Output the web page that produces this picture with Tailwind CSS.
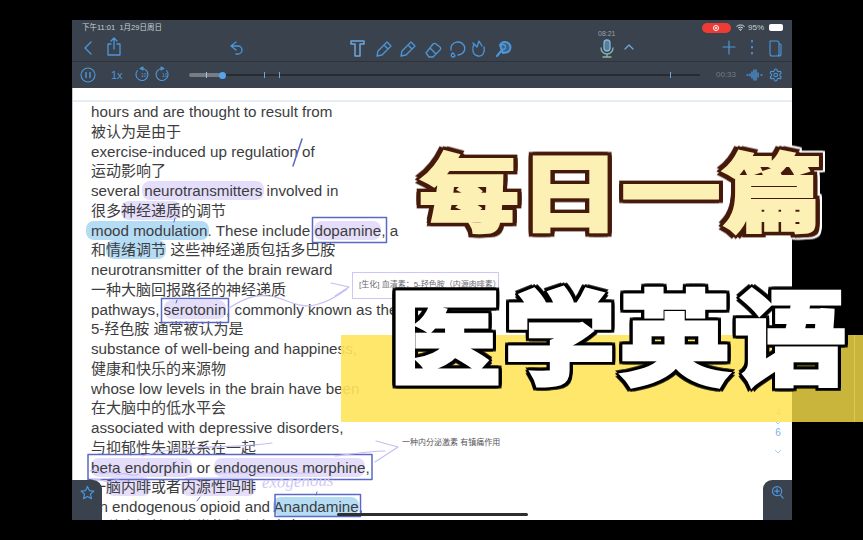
<!DOCTYPE html>
<html lang="zh"><head><meta charset="utf-8"><script src="https://cdn.jsdelivr.net/npm/@tailwindcss/browser@4"></script></head>
<body class="bg-black">
<div class="relative w-[863px] h-[540px] overflow-hidden bg-black font-['Liberation_Sans','Noto_Sans_CJK_SC',sans-serif]">
  <div class="pt-5 pl-[72px] w-[792px] h-[520px]">
    <div class="relative flex flex-col w-[720px] h-[500px] bg-white overflow-hidden">
      <!-- toolbars -->
      <header class="h-[68px] bg-[#39424d] text-[#4d97dc] shrink-0">
        <div class="h-[42px] border-b border-[#2d343d] relative">
          <div class="flex justify-between items-center h-[14px] pl-[10px] pr-[9px] text-[7.5px] text-[#c9ced3]">
            <span class="mt-px">下午11:01&nbsp;&nbsp;1月29日周日</span>
            <div class="flex items-center gap-[5px] mt-px">
              <span class="w-[29px] h-[10px] rounded-full bg-[#ee3b34] flex items-center justify-center"><span class="w-[6px] h-[6px] rounded-full border border-white bg-[#ee3b34] flex items-center justify-center"><span class="w-[2px] h-[2px] rounded-full bg-white"></span></span></span>
              <svg width="9" height="7" viewBox="0 0 9 7" fill="none" stroke="#d8dce0" stroke-width="1"><path d="M.5 2.5a6 6 0 0 1 8 0M2 4a4 4 0 0 1 5 0M4.5 6.5l-1-1a1.5 1.5 0 0 1 2 0z"/></svg>
              <span class="text-[8px] text-[#c9ced3] -ml-[2px]">95%</span>
              <span class="w-[14px] h-[7px] rounded-[2px] bg-white"></span>
            </div>
          </div>
          <span class="absolute left-[526px] top-[9px] text-[7px] text-[#9aa2ab]">08:21</span>
          <svg class="absolute left-0 top-0" width="720" height="42" viewBox="0 0 720 42" fill="none" stroke="#4d97dc" stroke-width="1.3" stroke-linecap="round" stroke-linejoin="round">
            <path d="M19 22l-6 6 6 6" />
            <path d="M39 24h-3v11h12V24h-3M42 29V18M39 21l3-3 3 3" />
            <path d="M164 22l-5 4 5 4M159 26h7a4 4 0 0 1 0 8h-2"/>
            <path d="M279 21h13v3h-4v12h-5V24h-4z" stroke="#6ea8d8" stroke-width="1.500"/>
            <path d="M305 36l1-5 9-9 4 4-9 9zM312 25l4 4"/>
            <path d="M329 36l1-5 9-9 4 4-9 9zM336 25l4 4" />
            <path d="M354 33l7-9a2 2 0 0 1 3 0l4 3a2 2 0 0 1 0 3l-7 7h-4zM358 28l6 6"/>
            <path d="M379 30a7 6.500 0 1 1 7 5M381 33a2 2 0 1 0 2 3c0-1-1-2-2-3z"/>
            <path d="M401 23l4 4 2-6 3 5M402 24c-2 4-2 11 4 12 5 1 7-4 6-9" />
            <path d="M425 36l5-6M428 25a5.500 5.500 0 1 1 8 7l-5 1z" fill="#4d97dc" fill-opacity=".35" stroke-width="2"/>
            <circle cx="431" cy="27" r="2.500"/>
            <rect x="532" y="20" width="6" height="11" rx="3" fill="#7fb7e3" fill-opacity=".5" stroke="#7fb7e3"/>
            <path d="M529 28a6 6 0 0 0 12 0M535 34v3M531 37h8" stroke="#8bb8a8"/>
            <path d="M553 29l4-4 4 4" stroke="#6ea8d8"/>
            <path d="M651 27h12M657 21v13" stroke-width="1.200"/>
            <path d="M680 21v.5M680 27v.5M680 33v.5" stroke-width="2"/>
            <path d="M698 21h7a2 2 0 0 1 2 2v11a2 2 0 0 1-2 2h-5a2 2 0 0 1-2-2zM707 24h1a1 1 0 0 1 1 1v9a2 2 0 0 1-2 2h-7" stroke-width="1.100"/>
          </svg>
        </div>
        <div class="relative h-[26px]">
          <svg class="absolute left-0 top-0" width="720" height="26" viewBox="0 0 720 26" fill="none" stroke="#4d97dc" stroke-width="1.100" stroke-linecap="round" stroke-linejoin="round">
            <circle cx="16" cy="13" r="7"/><path d="M14 10.500v5M18 10.500v5" stroke-width="1.400"/>
            <path d="M68 6.500l3-1.500v3zM70 6.500a6 6 0 1 1-4.500 2" />
            <path d="M92 6.500l-3-1.500v3zM90 6.500a6 6 0 1 0 4.500 2" />
            <path d="M675 13h1M678 12v2M680 10v6M682 8v10M684 8v10M686 11v4M689 13h1" stroke-width="1.300"/>
            <g transform="translate(696.500 5.800) scale(.6)" stroke-width="1.800"><path d="M12.220 2h-.44a2 2 0 0 0-2 2v.18a2 2 0 0 1-1 1.730l-.43.250a2 2 0 0 1-2 0l-.15-.080a2 2 0 0 0-2.730.730l-.22.380a2 2 0 0 0 .73 2.730l.15.100a2 2 0 0 1 1 1.720v.510a2 2 0 0 1-1 1.740l-.15.090a2 2 0 0 0-.73 2.730l.22.380a2 2 0 0 0 2.730.730l.15-.080a2 2 0 0 1 2 0l.43.250a2 2 0 0 1 1 1.730V20a2 2 0 0 0 2 2h.44a2 2 0 0 0 2-2v-.18a2 2 0 0 1 1-1.730l.43-.25a2 2 0 0 1 2 0l.15.08a2 2 0 0 0 2.730-.730l.22-.390a2 2 0 0 0-.73-2.730l-.15-.080a2 2 0 0 1-1-1.740v-.5a2 2 0 0 1 1-1.740l.15-.090a2 2 0 0 0 .73-2.730l-.22-.380a2 2 0 0 0-2.730-.730l-.15.080a2 2 0 0 1-2 0l-.43-.250a2 2 0 0 1-1-1.730V4a2 2 0 0 0-2-2z"/><circle cx="12" cy="12" r="3"/></g>
          </svg>
          <span class="absolute left-[39px] top-[6px] text-[11px] leading-[14px] text-[#4d97dc]">1x</span>
          <span class="absolute left-[69px] top-[10px] text-[5px] leading-[6px] text-[#4d97dc]">10</span>
          <span class="absolute left-[90px] top-[10px] text-[5px] leading-[6px] text-[#4d97dc]">10</span>
          <div class="absolute left-[117px] top-[12px] w-[511px] h-[2px] rounded-full bg-[#262c33]">
            <div class="h-[4px] -mt-px w-[33px] rounded-full bg-[#767d86]"></div>
          </div>
          <span class="absolute left-[147px] top-[10px] w-[7px] h-[7px] rounded-full bg-[#57a4ee]"></span>
          <span class="absolute left-[134px] top-[10px] w-px h-[6px] bg-[#9fc2e0]"></span>
          <span class="absolute left-[192px] top-[10px] w-px h-[6px] bg-[#6fa8da]"></span>
          <span class="absolute left-[207px] top-[10px] w-px h-[6px] bg-[#6fa8da]"></span>
          <span class="absolute left-[598px] top-[10px] w-px h-[6px] bg-[#6fa8da]"></span>
          <span class="absolute left-[644px] top-[7px] text-[8px] leading-[12px] text-[#747c85]">00:33</span>
        </div>
      </header>
      <!-- page -->
      <main class="relative flex-1 border-l border-[#c4c7cb] overflow-hidden">
        <div class="h-[14px] border-b-2 border-[#e4edf6]"></div>
        <div class="pl-[18px] text-[15.2px] leading-[19.75px] text-[#3d3d40] whitespace-nowrap">
          <div>hours and are thought to result from</div>
          <div class="text-[15px]">被认为是由于</div>
          <div>exercise-induced up regulation of</div>
          <div class="text-[15px]">运动影响了</div>
          <div>several <span class="bg-[#e4defb] rounded-lg px-[2px] -mx-[2px] py-px">neurotransmitters</span> involved in</div>
          <div class="text-[15px]">很多<span class="bg-[#e4defb] rounded-lg py-px">神经递质</span>的调节</div>
          <div><span class="bg-[#b5dcf5] rounded-lg pl-[5px] -ml-[5px] pr-[1px] -mr-[1px] py-px">mood modulation</span>. These include <span class="bg-[#e4defb] rounded-lg py-px">dopamine</span>, a</div>
          <div class="text-[15px]">和<span class="bg-[#b5dcf5] rounded-lg py-px">情绪调节</span> 这些神经递质包括多巴胺</div>
          <div>neurotransmitter of the brain reward</div>
          <div class="text-[15px]">一种大脑回报路径的神经递质</div>
          <div>pathways, <span class="bg-[#e4defb] rounded-lg py-px">serotonin</span>, commonly known as the</div>
          <div class="text-[15px]">5-羟色胺 通常被认为是</div>
          <div>substance of well-being and happiness,</div>
          <div class="text-[15px]">健康和快乐的来源物</div>
          <div>whose low levels in the brain have been</div>
          <div class="text-[15px]">在大脑中的低水平会</div>
          <div>associated with depressive disorders,</div>
          <div class="text-[15px]">与抑郁性失调联系在一起</div>
          <div><span class="bg-[#e4defb] rounded-lg py-px">beta endorphin</span> or <span class="bg-[#e4defb] rounded-lg py-px">endogenous morphine</span>,</div>
          <div class="text-[15px]">一<span class="bg-[#e4defb] rounded-lg py-px">脑内啡</span>或者<span class="bg-[#e4defb] rounded-lg py-px">内源性吗啡</span></div>
          <div>an endogenous opioid and <span class="bg-[#b5dcf5] rounded-lg py-px">Anandamine</span>,</div>
          <div class="text-[15px]">一种内源性阿片类物质和大麻素</div>
        </div>
      </main>
    </div>
  </div>

  <!-- annotations -->
  <svg class="absolute left-0 top-0" width="863" height="540" viewBox="0 0 863 540" fill="none" stroke-linecap="round" stroke-linejoin="round">
    <path d="M302 139l-9 27" stroke="#5b69c4" stroke-width="1.500"/>
    <g stroke="#5b69c4" stroke-width="1.500">
      <rect x="312.500" y="217.500" width="74" height="25"/>
      <rect x="161.500" y="298.500" width="67" height="24"/>
      <rect x="88" y="454.500" width="284" height="25"/>
      <rect x="275" y="494.500" width="85.500" height="22"/>
    </g>
    <g stroke="#c6bdf6" stroke-width="1.200">
      <path d="M229 308c14-9 26-14 40-12 18 2 28 13 46 9 13-3 24-10 32-16"/>
      <path d="M331 283l18 4-14 9"/>
      <path d="M376 441l22 6-23 15M335 456c16-2 36-5 50-5"/>
      <path d="M90 471c8-3 9 5 16 2s9 3 15 1 10 4 18 0M92 480c9-3 12 4 20 1s10 2 17 0"/>
      <path d="M142 456c40-12 90-7 130-13"/>
      <path d="M215 473h100" stroke-width=".8"/>
    </g>
    <text x="262" y="488" font-family="Liberation Serif" font-style="italic" font-size="17" fill="#cfc8f7" stroke="none" transform="rotate(-2 262 488)">exogenous</text>
    <path d="M173 464l3-2M200 497l-3 4M317 492l-1 3M177 300l-1 3M175 218l-1 4" stroke="#5b69c4"/>
  </svg>

  <div class="absolute left-[352px] top-[272px] w-[147px] h-[27px] border border-[#cec5fb] bg-white px-[6px] pt-[7px] text-[8px] leading-[10px] text-[#6a6a70] whitespace-nowrap">[生化] 血清素：5-羟色胺（内源肉啡素）</div>
  <div class="absolute left-[402px] top-[438px] text-[8px] leading-[10px] text-[#55555a] whitespace-nowrap">一种内分泌激素 有镇痛作用</div>

  <!-- side page numbers -->
  <div class="absolute left-[770px] top-[407px] w-4 flex flex-col items-center text-[#7fb2e0] text-[10px] leading-[11px]">
    <span>4</span>
    <svg class="my-[2px]" width="8" height="5" viewBox="0 0 8 5" fill="none" stroke="#a9cdec"><path d="M1 1l3 3 3-3"/></svg>
    <span>6</span>
    <svg class="mt-[11px]" width="8" height="5" viewBox="0 0 8 5" fill="none" stroke="#a9cdec"><path d="M1 1l3 3 3-3"/></svg>
  </div>

  <!-- floating tabs -->
  <div class="absolute left-[72px] top-[480px] w-[30px] h-[40px] bg-[#39424d] rounded-tr-[9px] pt-[5px] pl-[8px]">
    <svg width="15" height="15" viewBox="0 0 16 16" fill="none" stroke="#4d97dc" stroke-width="1.300" stroke-linejoin="round"><path d="M8 1.500l2 4.500 4.800.5-3.600 3.200 1 4.800L8 12.200 3.800 14.500l1-4.800L1.200 6.500 6 6z"/></svg>
  </div>
  <div class="absolute left-[763px] top-[480px] w-[29px] h-[40px] bg-[#39424d] rounded-tl-[9px] pt-[5px] pl-[8px]">
    <svg width="13" height="14" viewBox="0 0 15 16" fill="none" stroke="#4d97dc" stroke-width="1.400" stroke-linecap="round"><circle cx="7" cy="7" r="5.300"/><path d="M7 4.500v5M4.500 7h5M11 11.500l3 3.500"/></svg>
  </div>
  <div class="absolute left-[337px] top-[513px] w-[191px] h-[3px] rounded-full bg-[#2e2e30]"></div>

  <!-- yellow band -->
  <div class="absolute left-[341px] top-[335px] w-[522px] h-[87px] flex">
    <div class="w-[451px] bg-[#ffe45c]/90"></div>
    <div class="flex-1 bg-[#c9b53c]"><div class="ml-[62px] w-px h-full bg-[#ddc94a]"></div></div>
  </div>

  <!-- titles -->
  <div class="absolute left-[419px] top-[135px] text-[100px] leading-[120px] font-black text-[#fdf0b5] whitespace-nowrap tracking-[1px] [transform:scale(1,0.85)] [-webkit-text-stroke:2.5px_#fdf0b5] [filter:drop-shadow(4px_0_0_#451a0b)_drop-shadow(-4px_0_0_#451a0b)_drop-shadow(0_4px_0_#451a0b)_drop-shadow(0_-4px_0_#451a0b)_drop-shadow(2px_0_0_#fff)_drop-shadow(0_2px_0_#fff)_drop-shadow(0_-2px_0_#fff)]">每日一篇</div>
  <div class="absolute left-[389px] top-[275px] text-[112px] leading-[134px] font-black text-white whitespace-nowrap tracking-[3px] [transform:scale(1,0.92)] [-webkit-text-stroke:3px_#fff] [filter:drop-shadow(3px_0_0_#000)_drop-shadow(-3px_0_0_#000)_drop-shadow(0_3px_0_#000)_drop-shadow(0_-3px_0_#000)]">医学英语</div>
</div>
</body></html>
